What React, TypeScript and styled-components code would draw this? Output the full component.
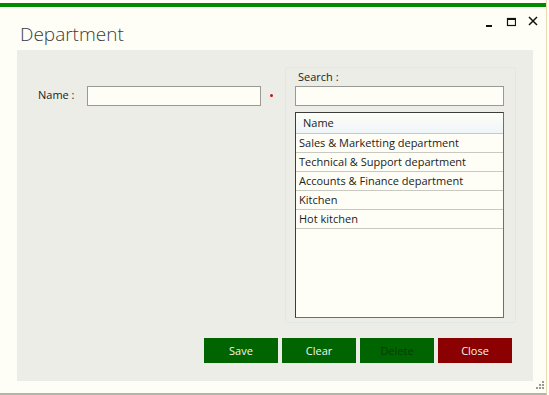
import React from "react";
import styled, { createGlobalStyle } from "styled-components";

const GlobalStyle = createGlobalStyle`
  html, body {
    margin: 0;
    padding: 0;
    background: #fefef6;
  }
  body {
    font-family: "Open Sans", "Noto Sans", sans-serif;
    color: #222;
  }
`;

const Window = styled.div`
  position: relative;
  width: 547px;
  height: 395px;
  padding-top: 3px;
  box-sizing: border-box;
  background: #fefef6;
  border-right: 1px solid #e6dcb4;
  border-bottom: 2px solid #b4b4aa;
  display: flex;
  flex-direction: column;
`;

const TopBar = styled.div`
  height: 4px;
  background: #008a00;
`;

const Header = styled.div`
  display: flex;
  justify-content: space-between;
  align-items: flex-start;
  height: 43px;
  padding: 0 8px 0 20px;
`;

const Title = styled.h1`
  margin: 16px 0 0;
  font-family: "Open Sans", "Noto Sans", sans-serif;
  font-weight: 300;
  font-size: 19px;
  line-height: 22px;
  color: #3a3a40;
`;

const Controls = styled.div`
  display: flex;
  align-items: center;
  gap: 12px;
  margin-top: 4px;
  color: #111;
`;

const Panel = styled.div`
  margin: 0 13px 0 17px;
  height: 331px;
  background: #ecede6;
  display: flex;
  flex-direction: column;
`;

const Body = styled.div`
  display: flex;
  padding-top: 17px;
  justify-content: space-between;
  padding-right: 17px;
`;

const NameRow = styled.div`
  display: flex;
  align-items: center;
  margin: 19px 0 0 21px;
  height: 20px;
`;

const Label = styled.span`
  font-size: 11px;
  width: 49px;
  margin-top: -3px;
  color: #222;
`;

const TextBox = styled.div<{ $width: number }>`
  width: ${(p) => p.$width}px;
  height: 20px;
  box-sizing: border-box;
  border: 1px solid #9a9a94;
  background: #fefef6;
`;

const Required = styled.span`
  width: 3px;
  height: 3px;
  background: #d01010;
  border-radius: 50%;
  margin-left: 9px;
  margin-top: -1px;
`;

const SearchBox = styled.div`
  width: 231px;
  height: 256px;
  box-sizing: border-box;
  border: 1px solid #e0e8e6;
  border-radius: 3px;
  padding: 1px 11px 0 9px;
  display: flex;
  flex-direction: column;
`;

const SearchLabel = styled.div`
  font-size: 11px;
  line-height: 15px;
  padding-left: 3px;
  margin-bottom: 2px;
`;

const Grid = styled.div`
  margin-top: 6px;
  height: 206px;
  box-sizing: border-box;
  border: 1px solid #6e6e6a;
  border-top-color: #3c3c3a;
  border-left-color: #3c3c3a;
  background: #fefef6;
  font-size: 11px;
`;

const HeadCell = styled.div`
  height: 20px;
  line-height: 20px;
  padding-left: 7px;
  background: linear-gradient(#fefef6, #eef4f8);
  border-bottom: 1px solid #c9c9c2;
`;

const Row = styled.div`
  height: 18px;
  line-height: 18px;
  padding-left: 3px;
  border-bottom: 1px solid #c9c9c2;
  white-space: nowrap;
`;

const Actions = styled.div`
  display: flex;
  justify-content: flex-end;
  gap: 4px;
  margin-top: 15px;
  padding-right: 21px;
`;

const Button = styled.button<{ $tone: "green" | "red"; $disabled?: boolean }>`
  width: 74px;
  height: 25px;
  border: none;
  padding: 0;
  font-family: "Open Sans", "Noto Sans", sans-serif;
  font-size: 11px;
  background: ${(p) => (p.$tone === "red" ? "#8b0000" : "#006400")};
  color: ${(p) => (p.$disabled ? "#083c08" : "#f4f4ee")};
`;

const Grip = styled.svg`
  position: absolute;
  right: 1px;
  bottom: 3px;
`;

const departments = [
  "Sales & Marketting department",
  "Technical & Support department",
  "Accounts & Finance department",
  "Kitchen",
  "Hot kitchen",
];

export default function App() {
  return (
    <>
      <GlobalStyle />
      <Window>
        <TopBar />
        <Header>
          <Title>Department</Title>
          <Controls>
            <svg width="10" height="20" viewBox="0 0 10 20">
              <rect x="2" y="14" width="6" height="2" fill="#111" />
            </svg>
            <svg width="10" height="20" viewBox="0 0 10 20">
              <rect x="1.5" y="7.5" width="8" height="7" fill="none" stroke="#111" strokeWidth="1.2" />
              <rect x="1" y="7" width="9" height="2" fill="#111" />
            </svg>
            <svg width="10" height="20" viewBox="0 0 10 20">
              <path d="M1 6 L9 14 M9 6 L1 14" stroke="#111" strokeWidth="1.5" />
            </svg>
          </Controls>
        </Header>
        <Panel>
          <Body>
            <NameRow>
              <Label>Name :</Label>
              <TextBox $width={174} />
              <Required />
            </NameRow>
            <SearchBox>
              <SearchLabel>Search :</SearchLabel>
              <TextBox $width={209} />
              <Grid>
                <HeadCell>Name</HeadCell>
                {departments.map((d) => (
                  <Row key={d}>{d}</Row>
                ))}
              </Grid>
            </SearchBox>
          </Body>
          <Actions>
            <Button $tone="green">Save</Button>
            <Button $tone="green">Clear</Button>
            <Button $tone="green" $disabled>
              Delete
            </Button>
            <Button $tone="red">Close</Button>
          </Actions>
        </Panel>
        <Grip width="10" height="10" viewBox="0 0 10 10">
          <rect x="7" y="1" width="2" height="2" fill="#9a9a94" />
          <rect x="4" y="4" width="2" height="2" fill="#9a9a94" />
          <rect x="7" y="4" width="2" height="2" fill="#9a9a94" />
          <rect x="1" y="7" width="2" height="2" fill="#9a9a94" />
          <rect x="4" y="7" width="2" height="2" fill="#9a9a94" />
          <rect x="7" y="7" width="2" height="2" fill="#9a9a94" />
        </Grip>
      </Window>
    </>
  );
}
